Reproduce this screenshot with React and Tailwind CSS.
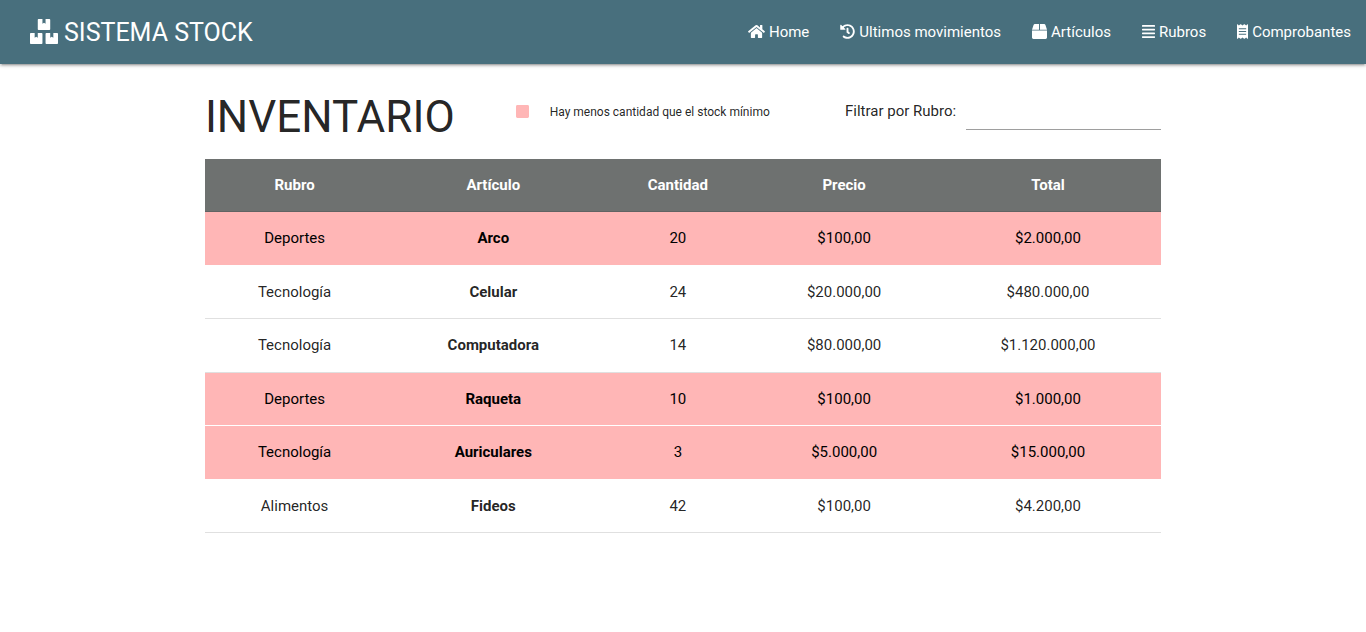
import { FaAlignJustify, FaBox, FaBoxes, FaHistory, FaHome, FaReceipt, FaSquare } from "react-icons/fa";

const links = [
  { label: "Home", Icon: FaHome, width: "w-[17px]" },
  { label: "Ultimos movimientos", Icon: FaHistory, width: "w-[15px]" },
  { label: "Artículos", Icon: FaBox, width: "w-[15px]" },
  { label: "Rubros", Icon: FaAlignJustify, width: "w-[13px]" },
  { label: "Comprobantes", Icon: FaReceipt, width: "w-[11px]" },
];

const items = [
  { rubro: "Deportes", articulo: "Arco", cantidad: 20, precio: "$100,00", total: "$2.000,00", low: true },
  { rubro: "Tecnología", articulo: "Celular", cantidad: 24, precio: "$20.000,00", total: "$480.000,00", low: false },
  { rubro: "Tecnología", articulo: "Computadora", cantidad: 14, precio: "$80.000,00", total: "$1.120.000,00", low: false },
  { rubro: "Deportes", articulo: "Raqueta", cantidad: 10, precio: "$100,00", total: "$1.000,00", low: true },
  { rubro: "Tecnología", articulo: "Auriculares", cantidad: 3, precio: "$5.000,00", total: "$15.000,00", low: true },
  { rubro: "Alimentos", articulo: "Fideos", cantidad: 42, precio: "$100,00", total: "$4.200,00", low: false },
];

const columns = ["Rubro", "Artículo", "Cantidad", "Precio", "Total"];

export default function App() {
  return (
    <div className="font-[Roboto,sans-serif] text-[15px] leading-normal text-black/87">
      <nav className="flex h-16 items-center justify-between bg-[#486f7d] pr-[15px] pl-[30px] text-white shadow-[0_2px_2px_0_rgba(0,0,0,0.14),0_3px_1px_-2px_rgba(0,0,0,0.12),0_1px_5px_0_rgba(0,0,0,0.2)]">
        <a href="#" className="flex items-center gap-1.5 pt-0.5 text-[25px]">
          <FaBoxes className="mb-[3px] w-[28px] shrink-0" />
          SISTEMA STOCK
        </a>
        <ul className="flex items-center gap-[31px]">
          {links.map(({ label, Icon, width }) => (
            <li key={label}>
              <a href="#" className="flex items-center gap-1">
                <Icon className={`mb-px h-[15px] shrink-0 ${width}`} />
                {label}
              </a>
            </li>
          ))}
        </ul>
      </nav>

      <main className="mx-auto w-[70%]">
        <header className="grid grid-cols-[13fr_13fr_14fr] items-start pt-[28px] pb-[16px]">
          <h1 className="text-[44px] leading-[1.15]">INVENTARIO</h1>
          <p className="flex items-start gap-[21px] pt-[11px] text-xs leading-[18px] whitespace-nowrap">
            <FaSquare className="mt-px h-[15px] w-[13px] shrink-0 text-[#ffb6b6]" />
            Hay menos cantidad que el stock mínimo
          </p>
          <div className="flex items-start justify-end gap-2.5">
            <label htmlFor="rubro" className="pt-2">Filtrar por Rubro:</label>
            <select id="rubro" defaultValue="" className="h-[38px] w-[195px] appearance-none border-b border-[#9e9e9e] bg-transparent outline-none">
              <option value=""></option>
              <option>Alimentos</option>
              <option>Deportes</option>
              <option>Tecnología</option>
            </select>
          </div>
        </header>

        <table className="w-full border-collapse text-center">
          <thead className="bg-[#6e7170] text-white">
            <tr className="border-b border-[#616363]">
              {columns.map((name) => (
                <th key={name} scope="col" className="px-[5px] py-[15px] font-bold">{name}</th>
              ))}
            </tr>
          </thead>
          <tbody>
            {items.map((item) => (
              <tr key={item.articulo} className={item.low ? "border-b border-white bg-[#ffb6b6] text-black" : "border-b border-[#e0e0e0]"}>
                <td className="px-[5px] py-[15px]">{item.rubro}</td>
                <td className="px-[5px] py-[15px] font-bold">{item.articulo}</td>
                <td className="px-[5px] py-[15px]">{item.cantidad}</td>
                <td className="px-[5px] py-[15px]">{item.precio}</td>
                <td className="px-[5px] py-[15px]">{item.total}</td>
              </tr>
            ))}
          </tbody>
        </table>
      </main>
    </div>
  );
}
